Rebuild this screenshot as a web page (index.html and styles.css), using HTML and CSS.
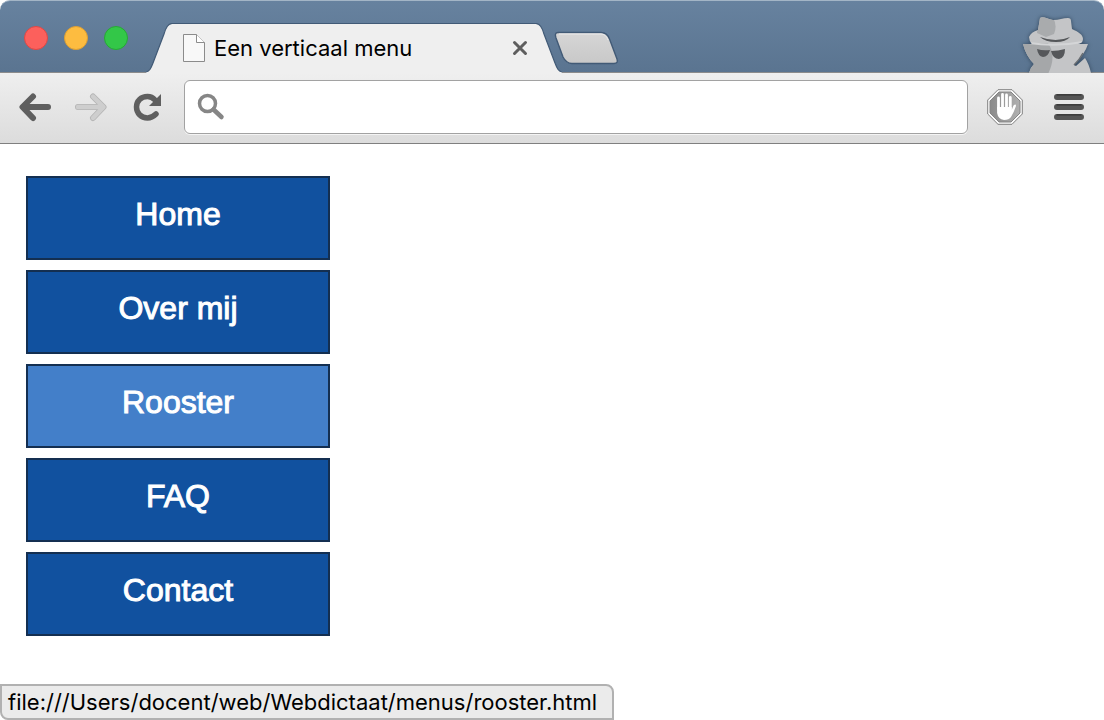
FILE: index.html
```html
<!DOCTYPE html>
<html lang="nl">
<head>
<meta charset="utf-8">
<meta name="viewport" content="width=device-width, initial-scale=1">
<title>Een verticaal menu</title>
<link rel="stylesheet" href="styles.css">
</head>
<body>
<div class="window">
  <header class="titlebar">
    <div class="lights">
      <button class="light light-close" aria-label="Sluiten"></button>
      <button class="light light-min" aria-label="Minimaliseren"></button>
      <button class="light light-max" aria-label="Vergroten"></button>
    </div>
    <div class="tab">
      <svg class="tab-edge" width="26" height="50" viewBox="0 0 26 50" aria-hidden="true">
        <path d="M0 50V49C4 48 5 45 7 40L18 11C20 4 22 1 26 1V50Z" fill="#efefef"/>
        <path d="M0 49C4 48 5 45 7 40L18 11C20 4 22 .5 26 .5" fill="none" stroke="#415a76" stroke-width="1.2"/>
      </svg>
      <div class="tab-body">
        <svg width="24" height="30" viewBox="0 0 24 30" aria-hidden="true">
          <path d="M1.500 1.500H14.500L22.500 9.500V28.500H1.500Z" fill="#f8f8f8" stroke="#8b8b8b"/>
          <path d="M14.500 1.500V9.500H22.500" fill="#fff" stroke="#8b8b8b"/>
        </svg>
        <span class="tab-title">Een verticaal menu</span>
        <button class="tab-close" aria-label="Tabblad sluiten">
          <svg width="16" height="16" viewBox="0 0 16 16" aria-hidden="true"><path d="M2.500 2.500L13.500 13.500M13.500 2.500L2.500 13.500" stroke="#5e5e5e" stroke-width="3" stroke-linecap="round"/></svg>
        </button>
      </div>
      <svg class="tab-edge" width="26" height="50" viewBox="0 0 26 50" aria-hidden="true">
        <path d="M26 50V49C22 48 21 45 19 40L8 11C6 4 4 1 0 1V50Z" fill="#efefef"/>
        <path d="M26 49C22 48 21 45 19 40L8 11C6 4 4 .5 0 .5" fill="none" stroke="#415a76" stroke-width="1.2"/>
      </svg>
    </div>
    <button class="new-tab" aria-label="Nieuw tabblad">
      <svg width="66" height="34" viewBox="0 0 66 34" aria-hidden="true">
        <defs><linearGradient id="newtab" x2="0" y2="1"><stop stop-color="#d6d6d6"/><stop offset="1" stop-color="#c8c8c8"/></linearGradient></defs>
        <path d="M5 1.500H48C52 1.500 55 4 56.500 8L64 28C65 31 64 32.500 61 32.500H19C14 32.500 12 30 10 26L3 7C2 4 2 1.500 5 1.500Z" fill="url(#newtab)" stroke="#415a76" stroke-width="1.4"/>
        <path d="M6 3H48C51 3 53.500 5 55 9" fill="none" stroke="#ececec"/>
      </svg>
    </button>
    <svg class="incognito" width="74" height="57" viewBox="0 0 74 57" role="img" aria-label="Incognito">
      <defs><clipPath id="spy"><path d="M20 2C23 0 27 3 33 4C39 4 43 2 48 2Q51 2 51 5L52 13C59 16 63 19 63 23Q63 27 58 28H68Q65 38 54 49L56 50L65 42Q69 48 71 57H9Q10 52 14 48Q6 40 3 28H12Q9 25 9 21Q11 16 18 14Z"/></clipPath></defs>
      <path d="M20 2C23 0 27 3 33 4C39 4 43 2 48 2Q51 2 51 5L52 13C59 16 63 19 63 23Q63 27 58 28H68Q65 38 54 49L56 50L65 42Q69 48 71 57H9Q10 52 14 48Q6 40 3 28H12Q9 25 9 21Q11 16 18 14Z" fill="#c4c5c7"/>
      <g clip-path="url(#spy)">
        <path d="M32 0Q38 9 34 18L26 21L17 17L19 0Z" fill="#a9abad"/>
        <path d="M0 27H28Q37 40 28 58H0Z" fill="#a5a7a9"/>
        <path d="M9 27Q36 31 63 26" fill="none" stroke="#d4d5d7" stroke-width="2"/>
      </g>
      <path d="M20 21Q36 27 50 21Q46 26 36 26Q25 26 20 21ZM17 33Q23 35 30 34Q28 41 23 41Q18 40 17 33ZM31 35Q38 35 45 33Q45 42 39 43Q33 43 31 35Z" fill="#55575a"/>
      <path d="M63 37Q60 43 54 49" fill="none" stroke="#696d72" stroke-width="1.500"/>
    </svg>
  </header>
  <form class="toolbar">
    <button type="button" class="tool" aria-label="Terug">
      <svg width="34" height="30" viewBox="0 0 34 30" aria-hidden="true"><path d="M15 4.500L4.500 15L15 26M5 15H30" fill="none" stroke="#5f5f5f" stroke-width="6" stroke-linecap="round" stroke-linejoin="round"/></svg>
    </button>
    <button type="button" class="tool" aria-label="Vooruit">
      <svg width="34" height="30" viewBox="0 0 34 30" aria-hidden="true"><path d="M19 4.500L29.500 15L19 26M29 15H4" fill="none" stroke="#b5b5b5" stroke-width="6" stroke-linecap="round" stroke-linejoin="round"/><path d="M19 4.500L29.500 15L19 26M29 15H4" fill="none" stroke="#cecece" stroke-width="4.400" stroke-linecap="round" stroke-linejoin="round"/></svg>
    </button>
    <button type="button" class="tool" aria-label="Vernieuwen">
      <svg width="32" height="30" viewBox="0 0 32 30" aria-hidden="true"><path d="M26 22Q22 26 17.500 26C11 26 6.500 21 6.500 15S11 4.500 17.500 4.500Q22 4.500 25 8" fill="none" stroke="#5f5f5f" stroke-width="5.500" stroke-linecap="round"/><path d="M31 2V14H19Z" fill="#5f5f5f"/></svg>
    </button>
    <label class="address">
      <svg width="30" height="30" viewBox="0 0 30 30" aria-hidden="true"><circle cx="11.500" cy="11.500" r="8" fill="none" stroke="#868686" stroke-width="3.500"/><path d="M17.500 17.500L25.500 25" stroke="#868686" stroke-width="4.500" stroke-linecap="round"/></svg>
      <input class="address-input" type="text" aria-label="Adres">
    </label>
    <button type="button" class="tool tool-block" aria-label="Adblock">
      <svg width="36" height="36" viewBox="0 0 36 36" aria-hidden="true">
        <defs><linearGradient id="sign" x2="1" y2="0"><stop stop-color="#8a8a8a"/><stop offset="1" stop-color="#b0b0b0"/></linearGradient></defs>
        <path d="M11 .7H25L35.300 11V25L25 35.300H11L.7 25V11Z" fill="#fafafa" stroke="#808080"/>
        <path d="M12 3H24L33 12V24L24 33H12L3 24V12Z" fill="url(#sign)" stroke="#858585"/>
        <path d="M11.500 20V9M15.500 18V5.500M19.500 18V6M23.300 20V8.500" stroke="#fff" stroke-width="2.800" stroke-linecap="round"/>
        <path d="M10.100 18H24.700V21L26.500 16.500Q29 14.500 29 17Q27 23 24 28Q22 31 17 31Q11 30 10.100 24Z" fill="#fff"/>
      </svg>
    </button>
    <button type="button" class="tool" aria-label="Menu">
      <svg width="30" height="26" viewBox="0 0 30 26" aria-hidden="true"><path d="M3 3H27M3 13H27M3 23H27" stroke="#555" stroke-width="6" stroke-linecap="round"/><path d="M3 .8H27M3 10.800H27M3 20.800H27" stroke="#353535" stroke-width="1.200" stroke-linecap="round"/></svg>
    </button>
  </form>
  <main class="page">
    <nav class="menu">
      <a class="menu-item" href="#home">Home</a>
      <a class="menu-item" href="#over">Over mij</a>
      <a class="menu-item menu-item-hover" href="#rooster">Rooster</a>
      <a class="menu-item" href="#faq">FAQ</a>
      <a class="menu-item" href="#contact">Contact</a>
    </nav>
  </main>
  <footer class="status">file:///Users/docent/web/Webdictaat/menus/rooster.html</footer>
</div>
</body>
</html>
```
FILE: styles.css
```css
* { box-sizing: border-box; }
body { margin: 0; background: #fff; font-family: Inter, Roboto, "Liberation Sans", sans-serif; color: #000; }
button { padding: 0; border: 0; background: none; }
svg { display: block; flex: none; }
.window { display: flex; flex-direction: column; min-height: 100vh; }
.titlebar {
  display: flex;
  align-items: flex-end;
  height: 73px;
  padding: 0 10px 0 24px;
  border-top: 1px solid #a3b5c6;
  border-radius: 10px 10px 0 0;
  background: linear-gradient(#67829f, #5a7490);
  box-shadow: inset 0 -1px #8c8c8c;
}
.lights { display: flex; gap: 16px; align-self: flex-start; padding: 25px 18px 0 0; }
.light { width: 24px; height: 24px; border-radius: 50%; border: 1px solid; }
.light-close { background: #fc605c; border-color: #df4744; }
.light-min { background: #fdbc40; border-color: #dd9f33; }
.light-max { background: #33c748; border-color: #27a835; }
.tab { display: flex; flex: 0 1 416px; height: 50px; min-width: 0; }
.tab-body {
  display: flex;
  flex: 1;
  min-width: 0;
  align-items: center;
  gap: 8px;
  padding: 0 8px 2px 10px;
  border-top: 1px solid #415a76;
  background: #efefef;
}
.tab-title { flex: 1; min-width: 0; overflow: hidden; white-space: nowrap; font-size: 22px; line-height: 30px; }
.new-tab { align-self: flex-start; margin: 30px auto 0 -9px; }
.incognito { filter: drop-shadow(0 0 2px #33475c); }
.toolbar {
  position: relative;
  display: flex;
  align-items: center;
  gap: 22px;
  height: 71px;
  padding: 0 20px 2px 18px;
  border-bottom: 1px solid #7f7f7f;
  background: linear-gradient(#efefef, #dcdcdc);
}
.address {
  display: flex;
  align-items: center;
  flex: 1;
  gap: 8px;
  min-width: 0;
  height: 54px;
  padding: 0 11px;
  border: 1px solid #a2a2a2;
  border-radius: 6px;
  background: #fff;
  box-shadow: 0 1px #f4f4f4;
}
.address-input { flex: 1; min-width: 0; border: 0; outline: 0; background: none; font: 22px Inter, Roboto, sans-serif; }
.tool-block { margin: 0 9px 0 -3px; }
.page { flex: 1; padding: 32px 26px; background: #fff; }
.menu { display: flex; flex-direction: column; gap: 10px; width: 304px; max-width: 100%; }
.menu-item {
  padding: 16px 16px 24px;
  border: 2px solid #142f51;
  background: #11519f;
  color: #fff;
  font-family: "Liberation Sans", Arial, sans-serif;
  font-size: 32px;
  line-height: 40px;
  text-align: center;
  text-decoration: none;
  -webkit-text-stroke: 1px #fff;
}
.menu-item-hover { background: #437fc9; }
.status {
  align-self: flex-start;
  padding: 1px 15px 1px 6px;
  border: 2px solid #b1b1b1;
  border-radius: 0 8px 0 8px;
  background: #ebebeb;
  font-size: 22px;
  line-height: 30px;
}
```
